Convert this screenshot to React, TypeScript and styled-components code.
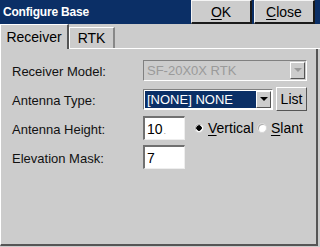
import styled, { createGlobalStyle } from "styled-components";

const GlobalStyle = createGlobalStyle`
  html, body {
    margin: 0;
    padding: 0;
    background: #cccccc;
  }
  body {
    font-family: "Liberation Sans", Arial, sans-serif;
  }
`;

const Window = styled.div`
  width: 320px;
  height: 247px;
  display: flex;
  flex-direction: column;
  background: #cccccc;
  overflow: hidden;
`;

const TitleBar = styled.div`
  height: 24px;
  display: flex;
  align-items: stretch;
  background: #0b2f66;
  padding-right: 5px;
`;

const Title = styled.div`
  flex: 1;
  display: flex;
  align-items: center;
  padding-left: 3px;
  color: #ffffff;
  font-weight: 700;
  font-size: 12px;
  letter-spacing: -0.2px;
`;

const TitleButton = styled.button<{ $w: number }>`
  width: ${({ $w }) => $w}px;
  height: 24px;
  margin-left: 2px;
  padding: 0;
  background: #cccccc;
  border: none;
  border-top: 1px solid #f4f4f4;
  border-left: 1px solid #f4f4f4;
  border-right: 2px solid #1a1a1a;
  border-bottom: 2px solid #1a1a1a;
  font-family: inherit;
  font-size: 14px;
  color: #000;

  u {
    text-decoration: underline;
    text-underline-offset: 2px;
  }
`;

const TabStrip = styled.div`
  height: 24px;
  display: flex;
  align-items: flex-end;
  border-bottom: 1px solid #ffffff;
  position: relative;
`;

const Tab = styled.div<{ $active?: boolean; $w: number }>`
  width: ${({ $w }) => $w}px;
  height: ${({ $active }) => ($active ? 24 : 21)}px;
  box-sizing: border-box;
  display: flex;
  align-items: center;
  justify-content: center;
  font-size: 14px;
  color: #000;
  background: #cccccc;
  border-top: 1px solid #ffffff;
  border-left: 1px solid #ffffff;
  border-right: 2px solid ${({ $active }) => ($active ? "#555" : "#888")};
  margin-bottom: ${({ $active }) => ($active ? "-1px" : "0")};
  height: ${({ $active }) => ($active ? "25px" : "21px")};
  z-index: ${({ $active }) => ($active ? 1 : 0)};
`;

const Page = styled.div`
  flex: 1;
  margin-right: 2px;
  margin-bottom: 1px;
  border-left: 1px solid #ffffff;
  border-right: 2px solid #555555;
  border-bottom: 2px solid #555555;
  padding: 9px 0 0 11px;
  display: flex;
  flex-direction: column;
  gap: 5px;
`;

const Row = styled.div`
  display: flex;
  align-items: center;
  height: 24px;
`;

const Label = styled.div`
  width: 131px;
  font-size: 13px;
  color: #111;
  padding-top: 3px;
`;

const Combo = styled.div<{ $w: number; $disabled?: boolean }>`
  width: ${({ $w }) => $w}px;
  height: 21px;
  box-sizing: border-box;
  display: flex;
  align-items: stretch;
  background: ${({ $disabled }) => ($disabled ? "#cccccc" : "#ffffff")};
  border-top: 1px solid #808080;
  border-left: 1px solid #808080;
  border-right: 1px solid #ffffff;
  border-bottom: 1px solid #ffffff;
  padding: 1px;
`;

const ComboText = styled.div<{ $disabled?: boolean; $selected?: boolean }>`
  flex: 1;
  display: flex;
  align-items: center;
  padding-left: 2px;
  font-size: 13px;
  color: ${({ $disabled, $selected }) =>
    $disabled ? "#9a9a9a" : $selected ? "#ffffff" : "#000"};
  background: ${({ $selected }) => ($selected ? "#0b2f66" : "transparent")};
  white-space: nowrap;
  overflow: hidden;
`;

const Arrow = styled.div<{ $disabled?: boolean }>`
  width: 15px;
  display: flex;
  align-items: center;
  justify-content: center;
  background: #cccccc;
  box-sizing: border-box;
  border-top: 1px solid #ffffff;
  border-left: 1px solid #ffffff;
  border-right: 1px solid #555;
  border-bottom: 1px solid #555;

  &::after {
    content: "";
    border-left: 4px solid transparent;
    border-right: 4px solid transparent;
    border-top: 4px solid ${({ $disabled }) => ($disabled ? "#9a9a9a" : "#000")};
  }
`;

const ListButton = styled.button`
  width: 31px;
  height: 24px;
  margin-left: 3px;
  padding: 0;
  background: #cccccc;
  border: none;
  border-top: 1px solid #ffffff;
  border-left: 1px solid #ffffff;
  border-right: 1px solid #555;
  border-bottom: 1px solid #555;
  font-family: inherit;
  font-size: 14px;
  color: #000;
`;

const TextBox = styled.div`
  width: 42px;
  height: 24px;
  box-sizing: border-box;
  background: #ffffff;
  border-top: 2px solid #707070;
  border-left: 2px solid #707070;
  border-right: 1px solid #eeeeee;
  border-bottom: 1px solid #eeeeee;
  display: flex;
  align-items: center;
  padding-left: 2px;
  font-size: 14px;
  color: #000;

  span {
    color: #999;
    font-size: 9px;
    margin-left: 1px;
    align-self: center;
    padding-top: 4px;
  }
`;

const RadioGroup = styled.div`
  display: flex;
  align-items: center;
  margin-left: 9px;
  gap: 3px;
`;

const Radio = styled.label<{ $checked?: boolean }>`
  display: flex;
  align-items: center;
  gap: 4px;
  font-size: 14px;
  color: #000;

  &::before {
    content: "";
    width: 10px;
    height: 10px;
    border-radius: 50%;
    background: #fff;
    box-sizing: border-box;
    border: 1px solid #d8d8d8;
    box-shadow: inset 1px 1px 0 #aaa;
    ${({ $checked }) =>
      $checked &&
      "background: radial-gradient(circle, #000 0 2.5px, #fff 3px);"}
  }

  u {
    text-decoration: underline;
    text-underline-offset: 2px;
  }
`;

export default function App() {
  return (
    <>
      <GlobalStyle />
      <Window>
        <TitleBar>
          <Title>Configure Base</Title>
          <TitleButton $w={61}>
            <u>O</u>K
          </TitleButton>
          <TitleButton $w={61}>
            <u>C</u>lose
          </TitleButton>
        </TitleBar>
        <TabStrip>
          <Tab $active $w={69}>
            Receiver
          </Tab>
          <Tab $w={46}>RTK</Tab>
        </TabStrip>
        <Page>
          <Row>
            <Label>Receiver Model:</Label>
            <Combo $w={164} $disabled>
              <ComboText $disabled>SF-20X0X RTK</ComboText>
              <Arrow $disabled />
            </Combo>
          </Row>
          <Row>
            <Label>Antenna Type:</Label>
            <Combo $w={130}>
              <ComboText $selected>[NONE] NONE</ComboText>
              <Arrow />
            </Combo>
            <ListButton>List</ListButton>
          </Row>
          <Row>
            <Label>Antenna Height:</Label>
            <TextBox>
              10<span>.</span>
            </TextBox>
            <RadioGroup>
              <Radio $checked>
                <span>
                  <u>V</u>ertical
                </span>
              </Radio>
              <Radio>
                <span>
                  <u>S</u>lant
                </span>
              </Radio>
            </RadioGroup>
          </Row>
          <Row>
            <Label>Elevation Mask:</Label>
            <TextBox>7</TextBox>
          </Row>
        </Page>
      </Window>
    </>
  );
}
